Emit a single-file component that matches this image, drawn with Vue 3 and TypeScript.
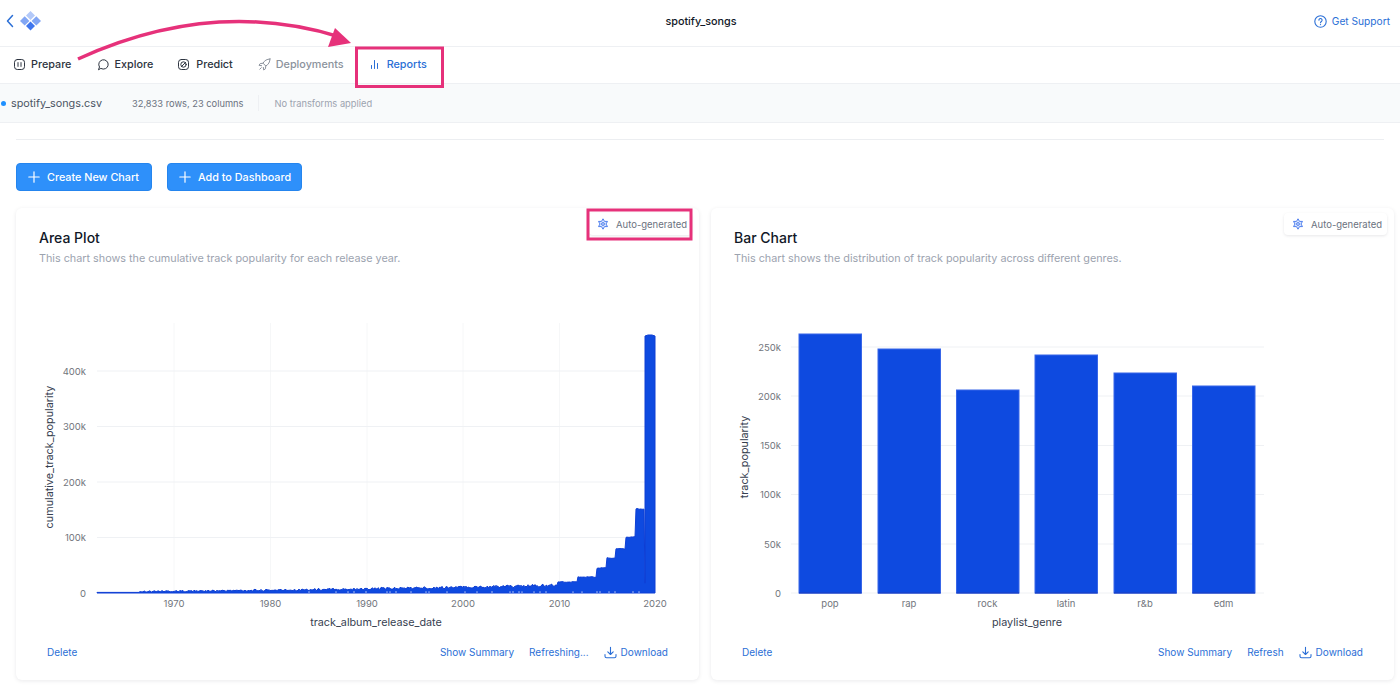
<script setup lang="ts">
import { computed } from 'vue'

const tabs = [
  { label: 'Prepare', icon: 'prepare', state: '' },
  { label: 'Explore', icon: 'explore', state: '' },
  { label: 'Predict', icon: 'predict', state: '' },
  { label: 'Deployments', icon: 'deploy', state: 'muted' },
  { label: 'Reports', icon: 'reports', state: 'active' },
]

const yTicksArea = [
  { label: '0', y: 593 }, { label: '100k', y: 537.5 }, { label: '200k', y: 482 },
  { label: '300k', y: 426.5 }, { label: '400k', y: 371 },
]
const xTicksArea = [
  { label: '1970', x: 174 }, { label: '1980', x: 270.5 }, { label: '1990', x: 367 },
  { label: '2000', x: 463 }, { label: '2010', x: 559.5 }, { label: '2020', x: 655 },
]
const yTicksBar = [
  { label: '0', y: 593 }, { label: '50k', y: 544 }, { label: '100k', y: 494.5 },
  { label: '150k', y: 445.5 }, { label: '200k', y: 396 }, { label: '250k', y: 347 },
]
const bars = [
  { label: 'pop', x: 799, top: 334 }, { label: 'rap', x: 878, top: 349 },
  { label: 'rock', x: 956.5, top: 390 }, { label: 'latin', x: 1035, top: 355 },
  { label: 'r&b', x: 1114, top: 373 }, { label: 'edm', x: 1192.5, top: 386 },
]

const steps: [number, number, number][] = [
  [636, 645, 509], [626, 636, 537], [616, 626, 549], [607, 616, 558],
  [597, 607, 568], [578, 597, 577], [558, 578, 582],
]

const noise = (x: number) => (Math.sin(x * 12.9898) * 43758.5453) % 1

const areaPath = computed(() => {
  let d = 'M97 593'
  for (let x = 97; x <= 645; x += 1) {
    const s = steps.find((st) => x >= st[0] && x < st[1])
    let y: number
    if (s) y = s[2] + noise(x) * 0.4
    else {
      const t = (x - 97) / 461
      const base = 592.4 - Math.min(1, t * 1.4) * 1.2 - t * t * 4.2
      y = x < 140 ? 592.4 : base - Math.abs(noise(x)) * (1.4 + t * 1.6)
    }
    d += ` L${x} ${y.toFixed(1)}`
  }
  return d + ' L645 336 L648 335 L652 335 L655 336 L655 593 Z'
})

const speckles = computed(() => {
  let d = ''
  for (let x = 300; x < 640; x += 3) {
    const n = Math.abs(noise(x * 1.3))
    if (n > 0.72) d += `M${x} 593v-${(1 + n).toFixed(1)}`
  }
  return d
})

const arrowPath = 'M78 59 C 150 26, 240 6, 340 37'
</script>

<template>
  <div class="page">
    <header class="topbar">
      <div class="brand">
        <svg width="8" height="14" viewBox="0 0 8 14"><path d="M6.500 1.500 1.500 7l5 5.500" fill="none" stroke="#2b6fd6" stroke-width="1.500" stroke-linecap="round" stroke-linejoin="round" /></svg>
        <svg width="21" height="20" viewBox="0 0 21 20">
          <path d="M10.500 0 15 4.500 10.500 9 6 4.500Z" fill="#b3c9f9" />
          <path d="M4.700 5.200 9.400 9.900 4.700 14.600 0 9.900Z" fill="#82a6f4" />
          <path d="M16.300 5.200 21 9.900 16.300 14.600 11.600 9.900Z" fill="#82a6f4" />
          <path d="M10.500 10.500 15 15 10.500 19.500 6 15Z" fill="#3f76ee" />
        </svg>
      </div>
      <div class="title">spotify_songs</div>
      <a class="support">
        <svg width="13" height="13" viewBox="0 0 13 13"><circle cx="6.500" cy="6.500" r="5.700" fill="none" stroke="#2b6fd6" stroke-width="1.100" /><path d="M4.900 5.100a1.600 1.600 0 1 1 2.500 1.400c-.6.4-.9.7-.9 1.300" fill="none" stroke="#2b6fd6" stroke-width="1.100" stroke-linecap="round" /><circle cx="6.500" cy="9.600" r=".65" fill="#2b6fd6" /></svg>
        Get Support
      </a>
    </header>

    <nav class="tabs">
      <div v-for="t in tabs" :key="t.label" class="tab" :class="[t.state, t.icon]">
        <svg width="13" height="13" viewBox="0 0 13 13" fill="none" stroke="currentColor" stroke-width="1" stroke-linecap="round" stroke-linejoin="round">
          <template v-if="t.icon === 'prepare'">
            <rect x="1.500" y="1.500" width="10" height="10" rx="2.800" /><path d="M5 4.600v3.800M8 4.600v3.800" />
          </template>
          <template v-else-if="t.icon === 'explore'">
            <path d="M1.600 11.400 2.500 9a4.700 4.700 0 1 1 1.700 1.600Z" />
          </template>
          <template v-else-if="t.icon === 'predict'">
            <rect x="1.500" y="1.500" width="10" height="10" rx="2.800" /><circle cx="6.500" cy="6.500" r="2.700" /><path d="M4.400 8.600 8.600 4.400" />
          </template>
          <template v-else-if="t.icon === 'deploy'">
            <path d="M12 1c-3.200.1-5.400 1.500-7 4.200L7.800 8C10.500 6.400 11.900 4.200 12 1ZM5 5.200 2.200 5.600 1 7.300l2.600.4M7.800 8l-.4 2.800L5.700 12l-.4-2.600M3.300 9.700 1.800 11.200" />
          </template>
          <template v-else>
            <path d="M3.500 10.500V7.500M6.500 10.500V2.500M9.500 10.500V5.500" />
          </template>
        </svg>
        <span>{{ t.label }}</span>
      </div>
    </nav>

    <section class="filebar">
      <span class="dot"></span>
      <span class="filename">spotify_songs.csv</span>
      <span class="meta">32,833 rows, 23 columns</span>
      <span class="sep"></span>
      <span class="transforms">No transforms applied</span>
    </section>

    <main class="content">
      <div class="divider"></div>
      <div class="actions">
        <button class="btn create"><svg width="12" height="12" viewBox="0 0 12 12"><path d="M6 .8v10.400M.8 6h10.400" stroke="#fff" stroke-width="1.200" stroke-linecap="round" /></svg>Create New Chart</button>
        <button class="btn add"><svg width="12" height="12" viewBox="0 0 12 12"><path d="M6 .8v10.400M.8 6h10.400" stroke="#fff" stroke-width="1.200" stroke-linecap="round" /></svg>Add to Dashboard</button>
      </div>

      <div class="cards">
        <article class="card">
          <div class="badge">
            <svg width="12" height="12" viewBox="0 0 12 12" fill="none" stroke="#4f7fee" stroke-width="1"><path d="M6 .8 7.500 3.400 10.500 3.400 9 6 10.500 8.600 7.500 8.600 6 11.200 4.500 8.600 1.500 8.600 3 6 1.500 3.400 4.500 3.400Z" fill="#dbe6fd" /><circle cx="6" cy="6" r="1.400" /></svg>
            Auto-generated
          </div>
          <h2>Area Plot</h2>
          <p>This chart shows the cumulative track popularity for each release year.</p>
          <svg class="chart" viewBox="16 310 683 325" width="683" height="325">
            <g class="grid">
              <line v-for="t in xTicksArea.slice(0, 5)" :key="t.label" :x1="t.x" :x2="t.x" y1="323" y2="593" class="v" />
              <line v-for="t in yTicksArea.slice(1)" :key="t.label" x1="97" x2="655" :y1="t.y" :y2="t.y" />
            </g>
            <path :d="areaPath" fill="#0e4ae0" stroke="#0e3fd4" stroke-width="1" stroke-linejoin="round" />
            <path :d="speckles" stroke="#a9bcf2" stroke-width="1" fill="none" />
            <text v-for="t in yTicksArea" :key="t.label" x="86" :y="t.y + 3.500" text-anchor="end" class="tick">{{ t.label }}</text>
            <text v-for="t in xTicksArea" :key="t.label" :x="t.x" y="607" text-anchor="middle" class="tick">{{ t.label }}</text>
            <text x="376" y="626" text-anchor="middle" class="axis">track_album_release_date</text>
            <text transform="translate(52.500 457) rotate(-90)" text-anchor="middle" class="axis">cumulative_track_popularity</text>
          </svg>
          <footer class="links">
            <a class="del">Delete</a>
            <a>Show Summary</a>
            <a>Refreshing...</a>
            <a class="dl"><svg width="13" height="13" viewBox="0 0 13 13" fill="none" stroke="#2b6fd6" stroke-width="1.100" stroke-linecap="round" stroke-linejoin="round"><path d="M6.500 1.200v7M3.800 5.800l2.700 2.700 2.700-2.700M1 8.500v1.700c0 1 .6 1.600 1.600 1.600h7.800c1 0 1.600-.6 1.600-1.600V8.500" /></svg>Download</a>
          </footer>
        </article>

        <article class="card">
          <div class="badge">
            <svg width="12" height="12" viewBox="0 0 12 12" fill="none" stroke="#4f7fee" stroke-width="1"><path d="M6 .8 7.500 3.400 10.500 3.400 9 6 10.500 8.600 7.500 8.600 6 11.200 4.500 8.600 1.500 8.600 3 6 1.500 3.400 4.500 3.400Z" fill="#dbe6fd" /><circle cx="6" cy="6" r="1.400" /></svg>
            Auto-generated
          </div>
          <h2>Bar Chart</h2>
          <p>This chart shows the distribution of track popularity across different genres.</p>
          <svg class="chart" viewBox="711 310 683 325" width="683" height="325">
            <g class="grid">
              <line v-for="t in yTicksBar" :key="t.label" x1="791" x2="1264" :y1="t.y" :y2="t.y" />
            </g>
            <g v-for="b in bars" :key="b.label">
              <rect :x="b.x" :y="b.top" width="62.500" :height="593 - b.top" class="bar" />
              <line :x1="b.x" :x2="b.x + 62.500" y1="593" y2="593" class="barbase" />
            </g>
            <text v-for="t in yTicksBar" :key="t.label" x="781" :y="t.y + 3.500" text-anchor="end" class="tick">{{ t.label }}</text>
            <text v-for="b in bars" :key="b.label" :x="b.x + 31" y="607" text-anchor="middle" class="tick">{{ b.label }}</text>
            <text x="1027" y="626" text-anchor="middle" class="axis">playlist_genre</text>
            <text transform="translate(748 457) rotate(-90)" text-anchor="middle" class="axis">track_popularity</text>
          </svg>
          <footer class="links">
            <a class="del">Delete</a>
            <a>Show Summary</a>
            <a>Refresh</a>
            <a class="dl"><svg width="13" height="13" viewBox="0 0 13 13" fill="none" stroke="#2b6fd6" stroke-width="1.100" stroke-linecap="round" stroke-linejoin="round"><path d="M6.500 1.200v7M3.800 5.800l2.700 2.700 2.700-2.700M1 8.500v1.700c0 1 .6 1.600 1.600 1.600h7.800c1 0 1.600-.6 1.600-1.600V8.500" /></svg>Download</a>
          </footer>
        </article>
      </div>
    </main>

    <svg class="annot" width="1400" height="688" viewBox="0 0 1400 688" fill="none">
      <path :d="arrowPath" stroke="#e6317a" stroke-width="3.500" stroke-linecap="butt" />
      <path d="M335 28 328 47 351 43Z" fill="#e6317a" />
      <rect x="356.500" y="48" width="86" height="38.500" stroke="#e6317a" stroke-width="3" />
      <rect x="588" y="210" width="103" height="29" stroke="#e6317a" stroke-width="3" />
    </svg>
  </div>
</template>

<style>
html, body { margin: 0; background: #fff; overflow: hidden; }
</style>

<style scoped>
.page { position: relative; width: 1400px; height: 688px; overflow: hidden; font-family: Inter, "Noto Sans", sans-serif; color: #1f2937; background: #fff; }
.topbar { height: 46px; display: grid; grid-template-columns: 1fr auto 1fr; align-items: center; padding: 0 10px 0 6px; border-bottom: 1px solid #eef0f3; }
.brand { display: flex; align-items: center; gap: 6px; margin-top: -4px; }
.title { font-size: 10.800px; font-weight: 500; color: #111827; margin: -4px 0 0 6px; }
.support { justify-self: end; display: flex; align-items: center; gap: 5px; font-size: 10.200px; color: #2b6fd6; margin-top: -4px; }
.tabs { height: 37px; display: flex; align-items: center; padding: 0 0 1px 13px; box-sizing: border-box; border-bottom: 1px solid #eef0f3; }
.tab { display: flex; align-items: center; font-size: 10.800px; font-weight: 500; color: #2d3440; }
.tab.prepare { gap: 5px; margin-right: 26px; }
.tab.explore { gap: 4px; margin-right: 24px; }
.tab.predict { gap: 6px; margin-right: 25px; }
.tab.deploy { gap: 5px; margin-right: 24.500px; }
.tab.muted { color: #8b929c; }
.tab.active { color: #2b6fd6; gap: 5.500px; }
.filebar { height: 38px; background: #f8fafb; border-bottom: 1px solid #eef0f3; display: flex; align-items: center; font-size: 9.300px; color: #6b7280; }
.dot { width: 5px; height: 5px; border-radius: 50%; background: #1e90ff; margin-left: 1px; margin-right: 5px; }
.filename { font-size: 10.800px; color: #4b5563; margin-right: 30px; }
.meta { color: #6b7280; }
.sep { width: 1px; height: 16px; background: #eef0f3; margin: 0 15px; }
.transforms { color: #9ca3af; }
.content { padding: 16px 0 0 16px; }
.divider { height: 1px; background: #eceef1; margin-right: 16px; }
.actions { display: flex; gap: 15px; margin-top: 23px; }
.btn { height: 28px; box-sizing: border-box; display: flex; align-items: center; gap: 7px; padding: 0 0 0 11px; font: 500 10.800px Inter, sans-serif; white-space: nowrap; color: #fff; background: #2e90fa; border: 1px solid #2585ee; border-radius: 4px; }
.btn.create { width: 136px; }
.btn.add { width: 135px; }
.cards { display: grid; grid-template-columns: 683px 683px; gap: 12px; margin-top: 17px; }
.card { position: relative; height: 472px; border-radius: 6px; background: #fff; box-shadow: 0 1px 4px rgba(17, 24, 39, .09); overflow: hidden; }
.card h2 { margin: 21px 0 0 23px; font-size: 14px; line-height: 18px; font-weight: 500; color: #111827; }
.card p { margin: 5px 0 0 23px; font-size: 10.800px; line-height: 14px; color: #9ca3af; }
.chart { display: block; margin-top: 44px; }
.badge { position: absolute; top: 5px; right: 7px; height: 22px; width: 103px; box-sizing: border-box; padding-left: 8px; display: flex; align-items: center; gap: 7px; font-size: 9.500px; color: #6b7280; background: #fff; border-radius: 4px; box-shadow: 0 1px 3px rgba(17, 24, 39, .1); }
.links { display: flex; align-items: center; height: 34px; padding: 0 31px; font-size: 10px; color: #2b6fd6; gap: 15px; }
.links .del { margin-right: auto; }
.dl { display: flex; align-items: center; gap: 4px; }
.grid line { stroke: #eff1f4; stroke-width: 1; }
.grid line.v { stroke: #f6f7f8; }
.tick { font: 9.500px Inter, sans-serif; fill: #71757c; }
.axis { font: 10.800px Inter, sans-serif; fill: #374151; }
.bar { fill: #0e4ae0; stroke: #3866e8; stroke-width: 1; }
.barbase { stroke: #0a2fb8; stroke-width: 1; }
.annot { position: absolute; left: 0; top: 0; pointer-events: none; }
</style>
